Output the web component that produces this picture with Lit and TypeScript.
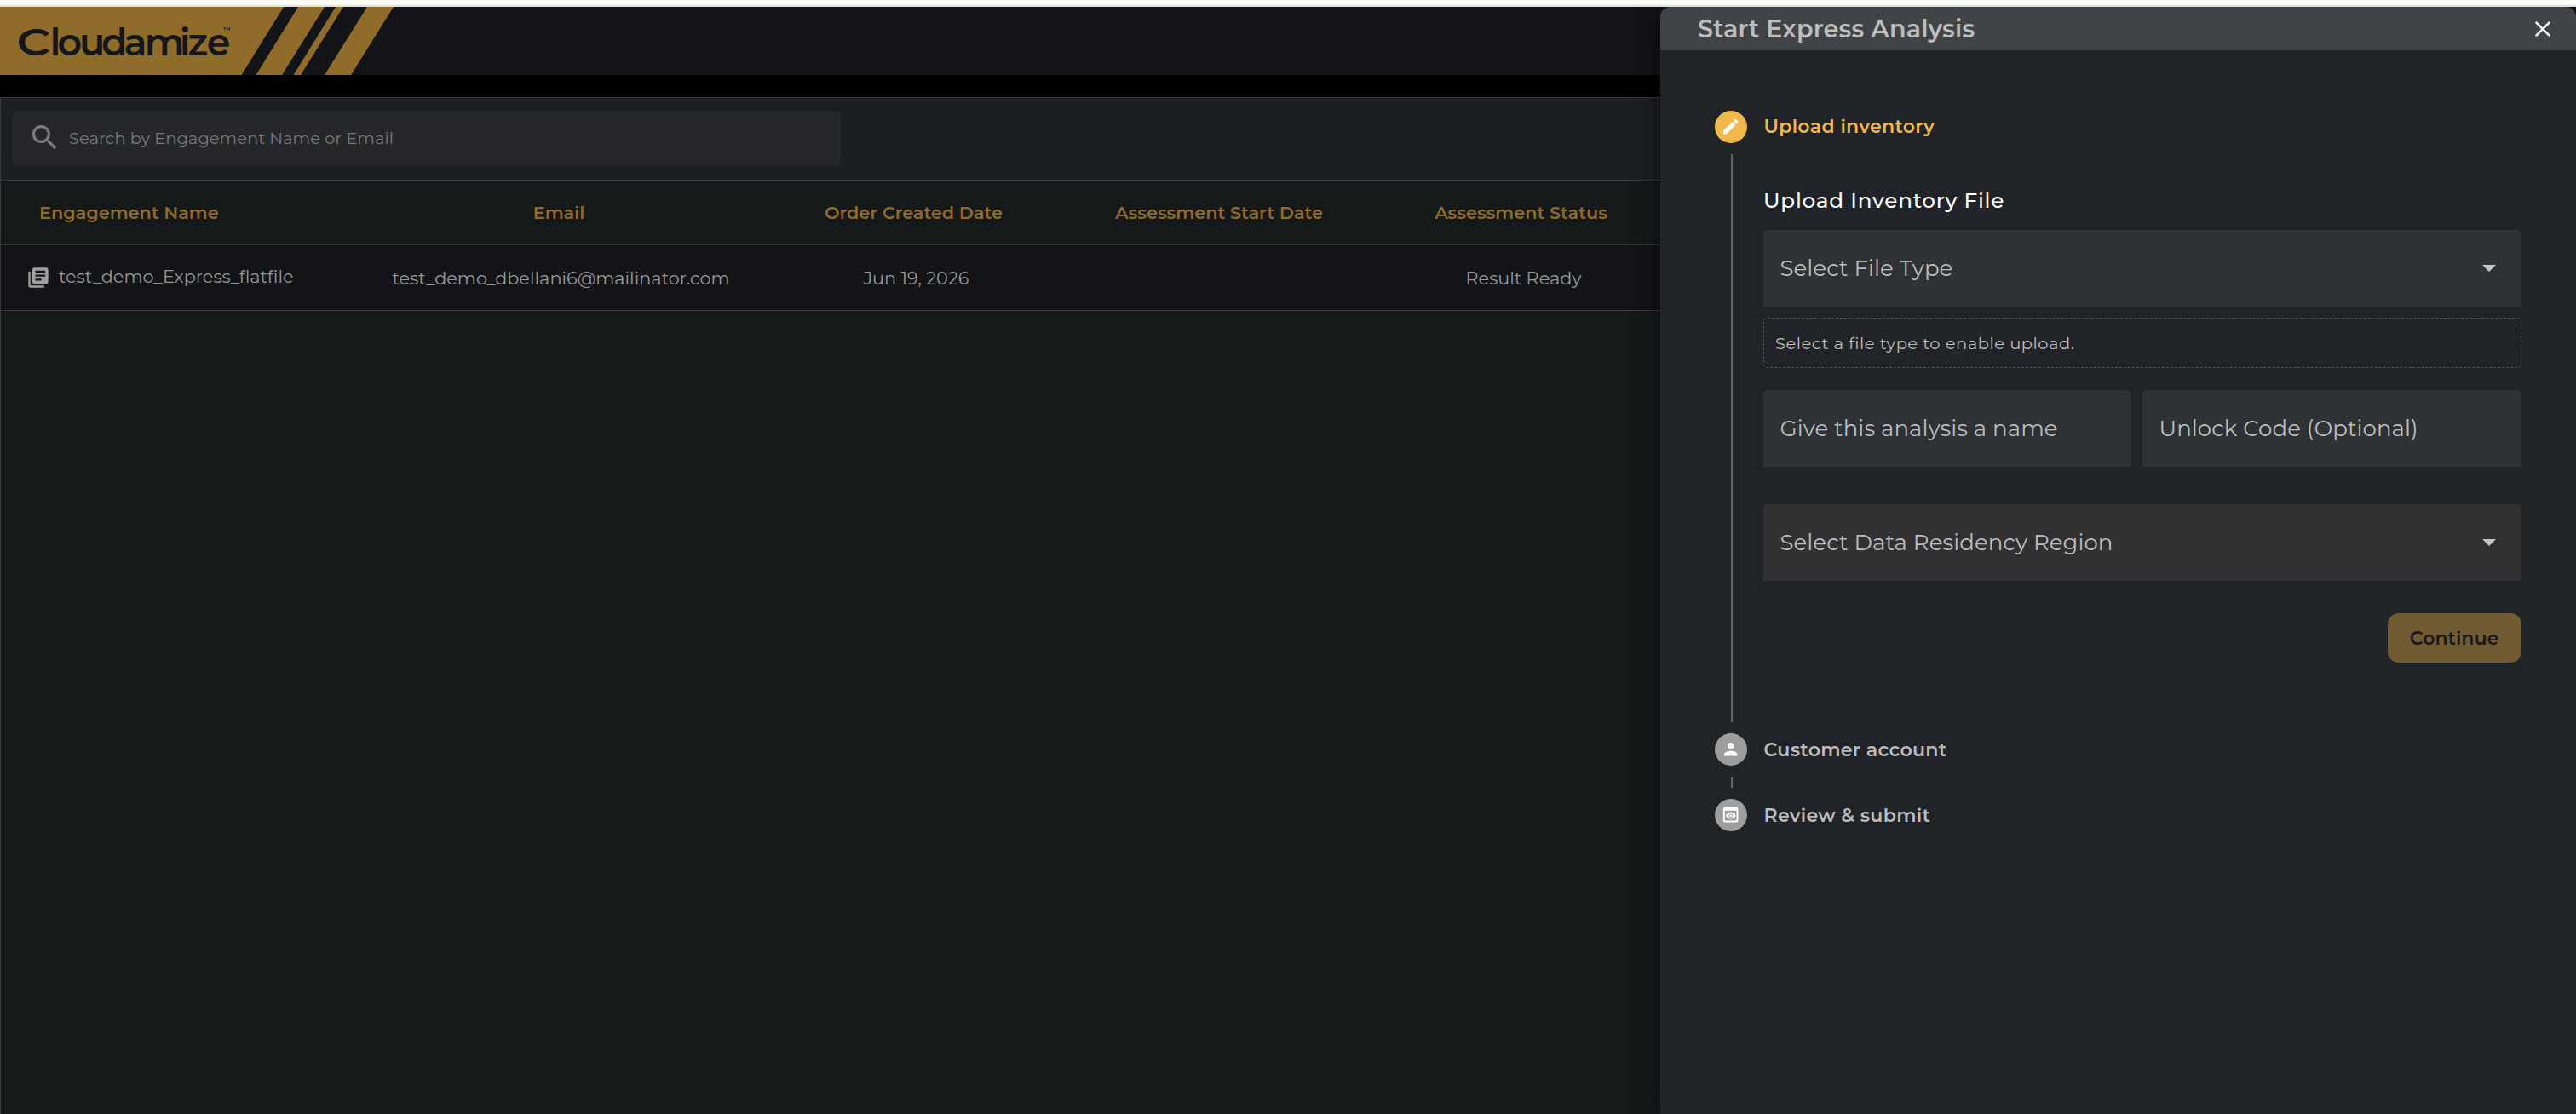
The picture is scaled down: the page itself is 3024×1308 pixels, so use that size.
import { LitElement, html, css, svg } from "lit";
import { classMap } from "lit/directives/class-map.js";

const ICONS = {
  search:
    "M15.5 14h-.79l-.28-.27C15.41 12.59 16 11.11 16 9.5 16 5.91 13.09 3 9.5 3S3 5.91 3 9.5 5.91 16 9.5 16c1.61 0 3.09-.59 4.23-1.57l.27.28v.79l5 4.99L20.49 19l-4.99-5zm-6 0C7.01 14 5 11.99 5 9.5S7.01 5 9.5 5 14 7.01 14 9.5 11.99 14 9.5 14z",
  library:
    "M4 6H2v14c0 1.1.9 2 2 2h14v-2H4V6zm16-4H8c-1.1 0-2 .9-2 2v12c0 1.1.9 2 2 2h12c1.1 0 2-.9 2-2V4c0-1.1-.9-2-2-2zm-1 9H9V9h10v2zm-4 4H9v-2h6v2zm4-8H9V5h10v2z",
  edit: "M3 17.25V21h3.75L17.81 9.94l-3.75-3.75L3 17.25zM20.71 7.04c.39-.39.39-1.02 0-1.41l-2.34-2.34c-.39-.39-1.02-.39-1.41 0l-1.83 1.83 3.75 3.75 1.83-1.83z",
  person:
    "M12 12c2.21 0 4-1.79 4-4s-1.79-4-4-4-4 1.79-4 4 1.79 4 4 4zm0 2c-2.67 0-8 1.34-8 4v2h16v-2c0-2.66-5.33-4-8-4z",
  preview:
    "M19 3H5c-1.11 0-2 .9-2 2v14c0 1.1.89 2 2 2h14c1.1 0 2-.9 2-2V5c0-1.1-.89-2-2-2zm0 16H5V7h14v12zm-5.5-6c0 .83-.67 1.5-1.5 1.5s-1.5-.67-1.5-1.5.67-1.5 1.5-1.5 1.5.67 1.5 1.5zM12 9c-2.73 0-5.06 1.66-6 4 .94 2.34 3.27 4 6 4s5.06-1.66 6-4c-.94-2.34-3.27-4-6-4zm0 6.5c-1.38 0-2.5-1.12-2.5-2.5s1.12-2.5 2.5-2.5 2.5 1.12 2.5 2.5-1.12 2.5-2.5 2.5z",
};

const icon = (name: keyof typeof ICONS, cls: string) =>
  html`<svg class=${cls} viewBox="0 0 24 24">${svg`<path d=${ICONS[name]} fill="currentColor"></path>`}</svg>`;

class AppBrand extends LitElement {
  static styles = css`
    :host { display: block; height: 80px; background: #121417; }
    .art { display: block; }
    .word { font-family: Montserrat, Inter, sans-serif; font-weight: 600; font-size: 44.5px; fill: #15171a; }
    .tm { font-family: Montserrat, Inter, sans-serif; font-weight: 600; font-size: 5.5px; fill: #15171a; }
  `;
  render() {
    return html`<svg class="art" width="480" height="80" viewBox="0 0 480 80">
      <g fill="#8f6c2a">
        <path d="M0 0H333L283.5 80H0z"></path>
        <path d="M350 0H381L331 80H300.5z"></path>
        <path d="M394 0H403L353 80H344.5z"></path>
        <path d="M431 0H462L412 80H381z"></path>
      </g>
      <text class="word" y="56.5"><tspan x="19.5" textLength="40" lengthAdjust="spacingAndGlyphs">C</tspan><tspan x="58.5 67.5 93 119 145.5 169.8 210.8 220.5 242.8">loudamize</tspan></text>
      <text class="tm" x="262" y="28">TM</text>
    </svg>`;
  }
}
customElements.define("app-brand", AppBrand);

interface Row { name: string; email: string; created: string; started: string; status: string; }

class EngagementTable extends LitElement {
  static styles = css`
    :host { display: block; font-size: 20.8px; }
    .row { display: grid; grid-template-columns: 430px 450px 383px 334px 375px 1fr; height: 76px; box-sizing: border-box; border-bottom: 1px solid #38393b; align-items: center; text-align: center; }
    .head { color: #8f6c2a; font-weight: 600; background: #151919; }
    .body { color: #98989a; background: #131418; height: 77px; }
    .first { text-align: left; padding-left: 45px; }
    .name { display: flex; align-items: center; gap: 10px; padding-left: 30px; }
    .cell { padding-left: 5px; }
    .cell + .cell { padding-left: 6px; }
    .file { width: 28px; height: 28px; color: #a0a0a0; }
    .label { padding-bottom: 3px; }
  `;
  private rows: Row[] = [
    { name: "test_demo_Express_flatfile", email: "test_demo_dbellani6@mailinator.com", created: "Jun 19, 2026", started: "", status: "Result Ready" },
  ];
  render() {
    return html`
      <div class="row head">
        <div class="first">Engagement Name</div>
        <div>Email</div><div>Order Created Date</div><div>Assessment Start Date</div><div>Assessment Status</div>
      </div>
      ${this.rows.map((r) => html`<div class="row body">
        <div class="name">${icon("library", "file")}<span class="label">${r.name}</span></div>
        <div class="cell">${r.email}</div><div class="cell">${r.created}</div><div class="cell">${r.started}</div><div class="cell">${r.status}</div>
      </div>`)}
    `;
  }
}
customElements.define("engagement-table", EngagementTable);

class ExpressPanel extends LitElement {
  static styles = css`
    :host { display: flex; flex-direction: column; background: #202327; border-radius: 12px 12px 0 0; box-shadow: 0 0 28px 2px rgba(0, 0, 0, 0.55); overflow: hidden; }
    .bar { height: 51px; flex: none; box-sizing: border-box; background: #414446; display: flex; align-items: center; justify-content: space-between; padding: 0 30px 0 44px; color: #bdbdbd; font-size: 28.6px; font-weight: 600; letter-spacing: 0.16px; }
    .close { width: 18px; height: 18px; }
    .steps { padding: 71px 64px 0; display: flex; flex-direction: column; }
    .step { display: flex; align-items: center; height: 38px; gap: 19.5px; color: #bdbdbd; font-size: 22.1px; font-weight: 600; letter-spacing: 0.3px; }
    .dot { width: 38px; height: 38px; border-radius: 50%; background: #9e9e9e; color: #fff; display: flex; align-items: center; justify-content: center; flex: none; }
    .glyph { width: 23.4px; height: 23.4px; }
    .active { color: #f2b84b; }
    .active .dot { background: #f2b84b; }
    .active .text { padding-bottom: 2px; }
    .section { margin: 13px 0 13px 19px; border-left: 2px solid #646668; height: 667px; box-sizing: border-box; padding-left: 36px; }
    .link { margin: 13px 0 13px 19px; width: 2px; height: 13px; background: #646668; }
    .form { display: flex; flex-direction: column; }
    .title { margin: 37px 0 0; height: 34px; line-height: 34px; color: #fff; font-size: 24.7px; font-weight: 500; letter-spacing: 0.76px; }
    .field { height: 90px; box-sizing: border-box; padding: 0 30px 0 19.5px; border-radius: 5px 5px 0 0; background: #2e3235; display: flex; align-items: center; justify-content: space-between; color: #bdbdbf; font-size: 26px; letter-spacing: 0.06px; }
    .type { margin-top: 18px; }
    .region { margin-top: 44px; background: #313134; }
    .hint { margin-top: 13px; height: 59px; box-sizing: border-box; border: 1px dashed #505356; border-radius: 5px; display: flex; align-items: center; padding-left: 13px; color: #bdbdbd; font-size: 19.5px; letter-spacing: 0.52px; }
    .pair { margin-top: 26px; display: grid; grid-template-columns: 432px 445px; gap: 13px; }
    .caret { width: 16px; height: 8px; }
    .go { margin: 38px 0 0; align-self: flex-end; width: 157px; height: 58px; border: 0; border-radius: 13px; background: #705b32; color: #17181a; font: 600 22.1px Montserrat, Inter, sans-serif; padding: 0 1px 0 0; }
  `;
  private step(name: keyof typeof ICONS, label: string, active = false) {
    return html`<div class=${classMap({ step: true, active })}><span class="dot">${icon(name, "glyph")}</span><span class="text">${label}</span></div>`;
  }
  private caret() {
    return html`<svg class="caret" viewBox="0 0 16 8"><path d="M0 0h16L8 8z" fill="#c4c4c6"></path></svg>`;
  }
  render() {
    return html`
      <div class="bar"><span>Start Express Analysis</span>
        <svg class="close" viewBox="0 0 18 18"><path d="M1.6 1.6L16.4 16.4M16.4 1.6L1.6 16.4" stroke="#fff" stroke-width="2.6" stroke-linecap="round"></path></svg>
      </div>
      <div class="steps">
        ${this.step("edit", "Upload inventory", true)}
        <div class="section"><div class="form">
          <h2 class="title">Upload Inventory File</h2>
          <div class="field type"><span>Select File Type</span>${this.caret()}</div>
          <div class="hint">Select a file type to enable upload.</div>
          <div class="pair">
            <div class="field">Give this analysis a name</div>
            <div class="field">Unlock Code (Optional)</div>
          </div>
          <div class="field region"><span>Select Data Residency Region</span>${this.caret()}</div>
          <button class="go">Continue</button>
        </div></div>
        ${this.step("person", "Customer account")}
        <div class="link"></div>
        ${this.step("preview", "Review & submit")}
      </div>
    `;
  }
}
customElements.define("express-panel", ExpressPanel);

class AppRoot extends LitElement {
  static styles = css`
    :host { display: block; position: relative; width: 100%; height: 1308px; overflow: hidden; background: #000; font-family: Montserrat, Inter, sans-serif; }
    .page { display: flex; flex-direction: column; height: 100%; }
    .strip { height: 8px; flex: none; box-sizing: border-box; background: #fafcf3; border-bottom: 2px solid #dfe4db; }
    .main { margin-top: 26px; flex: 1; background: #151919; border: 1px solid #38393b; border-width: 1px 0 0 1px; }
    .tools { height: 97px; box-sizing: border-box; padding: 16px 13px; background: #1c1f22; border-bottom: 1px solid #38393b; }
    .search { width: 973px; height: 64px; box-sizing: border-box; border-radius: 6px; background: #26272b; display: flex; align-items: center; padding-left: 19px; gap: 9px; color: #78797b; font-size: 19.5px; }
    .lens { width: 39px; height: 39px; margin-top: -3px; color: #7b7b7d; }
    .ask { padding-bottom: 2px; }
    .clip { position: absolute; inset: 8px 0 0 0; overflow: hidden; }
    .panel { position: absolute; top: 0; right: 0; bottom: 0; width: 1075px; }
  `;
  render() {
    return html`
      <div class="page">
        <div class="strip"></div>
        <app-brand></app-brand>
        <div class="main">
          <div class="tools"><div class="search">${icon("search", "lens")}<span class="ask">Search by Engagement Name or Email</span></div></div>
          <engagement-table></engagement-table>
        </div>
      </div>
      <div class="clip"><express-panel class="panel"></express-panel></div>
    `;
  }
}
customElements.define("app-root", AppRoot);
